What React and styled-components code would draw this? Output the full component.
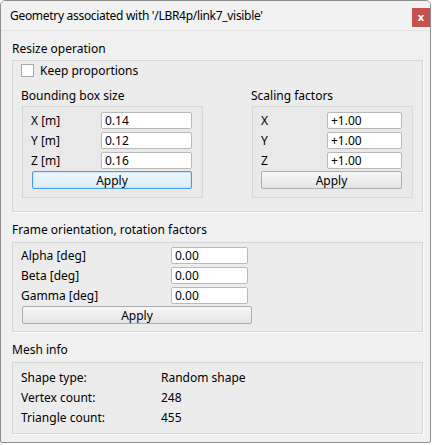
import React from 'react';
import styled, { createGlobalStyle } from 'styled-components';

const GlobalStyle = createGlobalStyle`
  body {
    margin: 0;
    background: #ffffff;
    font-family: "Noto Sans", "Open Sans", sans-serif;
    font-size: 12px;
    color: #000;
  }
`;

const Window = styled.div`
  width: 431px;
  height: 443px;
  box-sizing: border-box;
  border: 1px solid #8e8e8e;
  border-radius: 5px 5px 2px 2px;
  background: #f0f0f0;
  display: flex;
  flex-direction: column;
  overflow: hidden;
`;

const TitleBar = styled.div`
  height: 29px;
  flex: none;
  display: flex;
  align-items: flex-start;
  justify-content: space-between;
  border-bottom: 1px solid #e2e2e2;
  background: #f2f2f2;
`;

const Title = styled.div`
  padding: 7px 0 0 9px;
  line-height: 16px;
  letter-spacing: -0.3px;
`;

const CloseButton = styled.button`
  margin: 7px 0 0 0;
  width: 18px;
  height: 19px;
  padding: 0 0 2px 0;
  border: none;
  background: #c75050;
  color: #fff;
  font-family: inherit;
  font-size: 11px;
  font-weight: bold;
  line-height: 17px;
`;

const Body = styled.div`
  flex: 1;
  padding: 10px 7px 0 11px;
  display: flex;
  flex-direction: column;
`;

const SectionLabel = styled.div`
  line-height: 16px;
  height: 16px;
  margin-bottom: ${p => p.$gap || 3}px;
`;

const Group = styled.div`
  box-sizing: border-box;
  border: 1px solid #d6d6d6;
  background: #ececec;
  box-shadow: 1px 1px 0 #fafafa;
  padding: ${p => p.$pad};
  margin-bottom: ${p => p.$after || 0}px;
`;

const CheckRow = styled.label`
  display: flex;
  align-items: center;
  gap: 6px;
  height: 16px;
`;

const CheckBox = styled.span`
  width: 11px;
  height: 11px;
  background: #fff;
  border: 1px solid #a8a8a8;
`;

const Columns = styled.div`
  display: flex;
  margin-top: 10px;
`;

const Column = styled.div`
  width: ${p => p.$width}px;
  flex: none;
  display: flex;
  flex-direction: column;
`;

const ColumnLabel = styled.div`
  line-height: 16px;
  height: 16px;
  margin-bottom: 2px;
`;

const InnerBox = styled.div`
  box-sizing: border-box;
  width: ${p => p.$width}px;
  margin-left: 1px;
  border: 1px solid #d8d8d8;
  background: #e9e9e9;
  padding: 5px 10px 8px 8px;
`;

const FieldGrid = styled.div`
  display: grid;
  grid-template-columns: ${p => p.$cols};
  row-gap: 3px;
  align-items: center;
`;

const FieldLabel = styled.div`
  line-height: 17px;
`;

const Input = styled.input`
  box-sizing: border-box;
  width: 100%;
  height: 17px;
  border: 1px solid #b9b9b9;
  border-radius: 2px;
  background: #fff;
  padding: 0 3px;
  font-family: inherit;
  font-size: 12px;
  color: #000;
  outline: none;
`;

const Button = styled.button`
  grid-column: 1 / -1;
  box-sizing: border-box;
  width: ${p => (p.$width ? `${p.$width}px` : 'auto')};
  height: 18px;
  margin: -1px 0 0 ${p => p.$indent || 0}px;
  padding: 0;
  border: 1px solid ${p => (p.$focused ? '#4a9de0' : '#adadad')};
  border-radius: 2px;
  background: ${p =>
    p.$focused
      ? 'linear-gradient(#eef6fc, #dcecf8)'
      : 'linear-gradient(#f7f7f7, #e4e4e4)'};
  box-shadow: ${p => (p.$focused ? 'inset 0 0 0 1px #cfe6f8' : 'none')};
  font-family: inherit;
  font-size: 12px;
  line-height: 15px;
  color: #000;
`;

const InfoGrid = styled.div`
  display: grid;
  grid-template-columns: 140px 1fr;
  grid-auto-rows: 20px;
  align-items: center;
`;

const ResizeGroup = () => (
  <Group $pad="1px 9px 13px 8px" $after={10}>
    <CheckRow>
      <CheckBox />
      Keep proportions
    </CheckRow>
    <Columns>
      <Column $width={230}>
        <ColumnLabel>Bounding box size</ColumnLabel>
        <InnerBox $width={181}>
          <FieldGrid $cols="70px 91px">
            <FieldLabel>X [m]</FieldLabel>
            <Input defaultValue="0.14" />
            <FieldLabel>Y [m]</FieldLabel>
            <Input defaultValue="0.12" />
            <FieldLabel>Z [m]</FieldLabel>
            <Input defaultValue="0.16" />
            <Button $focused $indent={1}>Apply</Button>
          </FieldGrid>
        </InnerBox>
      </Column>
      <Column $width={162}>
        <ColumnLabel>Scaling factors</ColumnLabel>
        <InnerBox $width={161}>
          <FieldGrid $cols="66px 75px">
            <FieldLabel>X</FieldLabel>
            <Input defaultValue="+1.00" />
            <FieldLabel>Y</FieldLabel>
            <Input defaultValue="+1.00" />
            <FieldLabel>Z</FieldLabel>
            <Input defaultValue="+1.00" />
            <Button>Apply</Button>
          </FieldGrid>
        </InnerBox>
      </Column>
    </Columns>
  </Group>
);

const RotationGroup = () => (
  <Group $pad="4px 0 7px 8px" $after={10}>
    <FieldGrid $cols="150px 77px">
      <FieldLabel>Alpha [deg]</FieldLabel>
      <Input defaultValue="0.00" />
      <FieldLabel>Beta [deg]</FieldLabel>
      <Input defaultValue="0.00" />
      <FieldLabel>Gamma [deg]</FieldLabel>
      <Input defaultValue="0.00" />
      <Button $indent={1} $width={230}>Apply</Button>
    </FieldGrid>
  </Group>
);

const MeshGroup = () => (
  <Group $pad="4px 0 6px 8px">
    <InfoGrid>
      <div>Shape type:</div>
      <div>Random shape</div>
      <div>Vertex count:</div>
      <div>248</div>
      <div>Triangle count:</div>
      <div>455</div>
    </InfoGrid>
  </Group>
);

const App = () => (
  <>
    <GlobalStyle />
    <Window>
      <TitleBar>
        <Title>Geometry associated with '/LBR4p/link7_visible'</Title>
        <CloseButton>x</CloseButton>
      </TitleBar>
      <Body>
        <SectionLabel>Resize operation</SectionLabel>
        <ResizeGroup />
        <SectionLabel $gap={4}>Frame orientation, rotation factors</SectionLabel>
        <RotationGroup />
        <SectionLabel $gap={4}>Mesh info</SectionLabel>
        <MeshGroup />
      </Body>
    </Window>
  </>
);

export default App;
